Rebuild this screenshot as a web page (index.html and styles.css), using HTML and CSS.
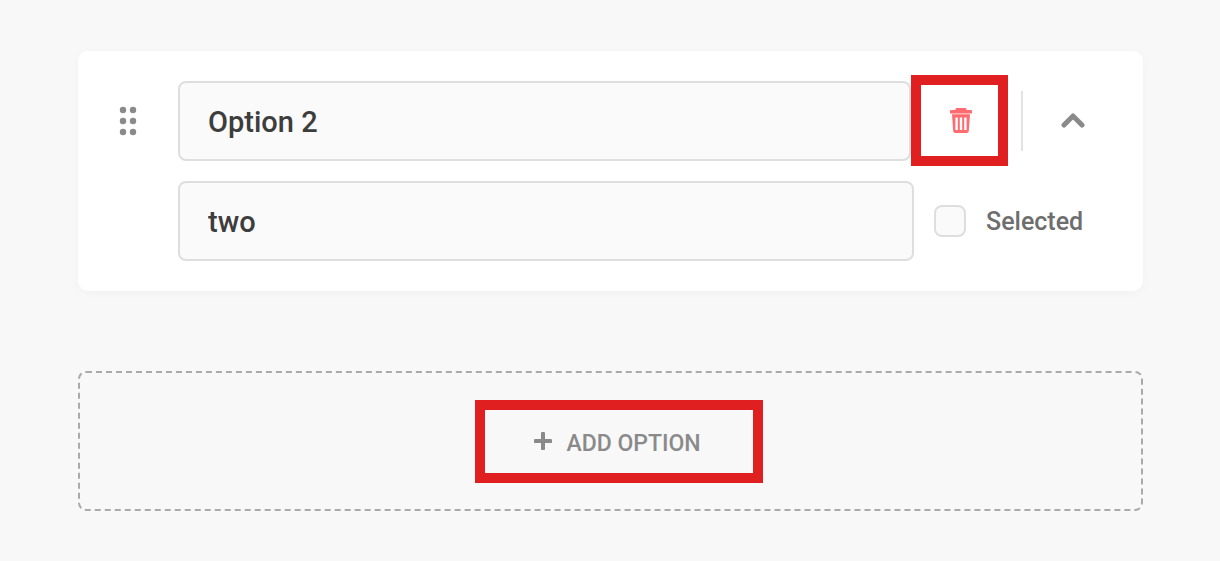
FILE: index.html
```html
<!DOCTYPE html>
<html lang="en">

<head>
    <meta charset="UTF-8">
    <title>Options</title>
    <link rel="stylesheet" href="styles.css">
</head>

<body>

    <div class="card">
        <div class="row">
            <div class="drag-handle">
                <svg width="20" height="32" viewBox="0 0 20 32" fill="#8a8a8a">
                    <circle cx="5" cy="5" r="3.2"/><circle cx="15" cy="5" r="3.2"/>
                    <circle cx="5" cy="16" r="3.2"/><circle cx="15" cy="16" r="3.2"/>
                    <circle cx="5" cy="27" r="3.2"/><circle cx="15" cy="27" r="3.2"/>
                </svg>
            </div>
            <input class="field field-name" type="text" value="Option 2">
            <button type="button" class="delete-btn">
                <svg width="22" height="25" viewBox="0 0 22 25">
                    <path fill="#ff6b70" d="M6.800 0h8.400a1.500 1.500 0 0 1 1.300 1V2H21a1 1 0 0 1 1 1v2.500H0V3a1 1 0 0 1 1-1h4.500V1a1.500 1.500 0 0 1 1.300-1z"/>
                    <path fill="#ff6b70" fill-rule="evenodd" d="M2 6.300h18l-1.200 16.700a2.200 2.200 0 0 1-2.200 2h-11.200a2.200 2.200 0 0 1-2.200-2zM5.400 9.500v12.500h2.400V9.500zM9.800 9.500v12.500h2.400V9.500zM14.200 9.500v12.500h2.400V9.500z"/>
                </svg>
            </button>
            <div class="divider"></div>
            <button type="button" class="collapse-btn">
                <svg width="24" height="16" viewBox="0 0 24 16">
                    <path d="M3 13l9-9 9 9" fill="none" stroke="#8a8a8a" stroke-width="5" stroke-linecap="round" stroke-linejoin="round"/>
                </svg>
            </button>
        </div>
        <div class="row row-value">
            <input class="field field-value" type="text" value="two">
            <label class="selected">
                <span class="checkbox"></span>
                Selected
            </label>
        </div>
    </div>

    <div class="add-area">
        <button type="button" class="add-btn">
            <svg width="18" height="18" viewBox="0 0 18 18">
                <path d="M9 1.500v15M1.500 9h15" fill="none" stroke="#8a8a8a" stroke-width="4" stroke-linecap="round"/>
            </svg>
            <span class="add-label">ADD OPTION</span>
        </button>
    </div>

</body>

</html>
```

FILE: styles.css
```css
body {
    font-family: Roboto, 'Liberation Sans', sans-serif;
    background-color: #f8f8f8;
    margin: 0;
    padding: 51px 77px 0 78px;
}

.card {
    background-color: #fff;
    border-radius: 10px;
    box-shadow: 0 2px 10px rgba(0, 0, 0, 0.03);
    padding: 30px 0;
    height: 240px;
    box-sizing: border-box;
}

.row {
    display: flex;
    align-items: center;
    height: 80px;
}

.row-value {
    margin-top: 20px;
    padding-left: 100px;
}

.drag-handle {
    width: 100px;
    display: flex;
    justify-content: center;
}

.field {
    box-sizing: border-box;
    height: 80px;
    padding: 2px 28px 0;
    border: 2px solid #dedede;
    border-radius: 8px;
    background-color: #fafafa;
    font-family: inherit;
    font-size: 29px;
    font-weight: 500;
    color: #3d3d3d;
}

.field-name {
    width: 733px;
}

.field-value {
    width: 736px;
}

.delete-btn {
    box-sizing: border-box;
    width: 97px;
    height: 91px;
    border: 10px solid #e02020;
    background-color: #fff;
    padding: 0 0 0 2px;
    margin: -1px 0 0;
    display: flex;
    align-items: center;
    justify-content: center;
}

.divider {
    width: 2px;
    height: 60px;
    background-color: #e3e3e3;
    margin-left: 13px;
    margin-right: 27px;
}

.collapse-btn {
    border: none;
    background: none;
    padding: 0;
    width: 46px;
    height: 24px;
    margin-bottom: 2px;
    display: flex;
    align-items: center;
    justify-content: center;
}

.selected {
    display: flex;
    align-items: center;
    gap: 20px;
    margin-left: 20px;
    font-size: 25px;
    font-weight: 500;
    color: #6e6e6e;
}

.checkbox {
    box-sizing: border-box;
    width: 32px;
    height: 32px;
    border: 2px solid #dedede;
    border-radius: 8px;
    background-color: #fafafa;
}

.add-area {
    box-sizing: border-box;
    height: 140px;
    margin-top: 80px;
    border: 2px dashed #aaa;
    border-radius: 8px;
    display: flex;
    justify-content: center;
    align-items: center;
    padding-left: 17px;
}

.add-btn {
    box-sizing: border-box;
    width: 288px;
    height: 83px;
    border: 10px solid #e02020;
    background: none;
    padding: 0 3px 0 0;
    display: flex;
    align-items: center;
    justify-content: center;
    gap: 14px;
    font-family: inherit;
    font-size: 23px;
    font-weight: 500;
    color: #8a8a8a;
}

.add-label {
    margin-top: 4px;
}
```
